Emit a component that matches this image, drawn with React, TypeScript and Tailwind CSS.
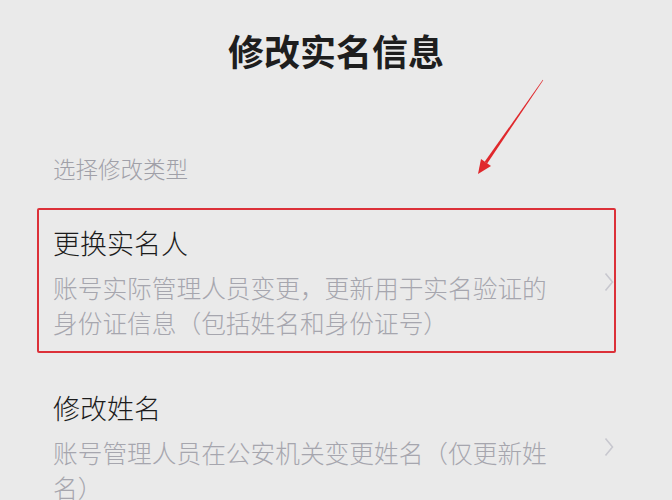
import React from "react";

const Chevron = () => (
  <svg width="10" height="20" viewBox="0 0 10 20" className="shrink-0">
    <polyline points="1.5,1.5 8.5,10 1.5,18.5" fill="none" stroke="#c8c8cf" strokeWidth="1.6" />
  </svg>
);

const Item = ({ title, desc }: { title: string; desc: string }) => (
  <div className="flex items-center pl-[53px] pr-[58px]">
    <div className="w-[505px]">
      <div className="text-[27px] leading-[36px] font-light text-[#1c1c1c]">{title}</div>
      <div className="mt-[8.5px] text-[24.7px] leading-[35px] font-light text-[#a6a6ae]">{desc}</div>
    </div>
    <div className="flex-1" />
    <Chevron />
  </div>
);

export default function App() {
  return (
    <div className="relative w-[672px] h-[500px] overflow-hidden bg-[#eaeaea] font-['Noto_Sans_CJK_SC','Noto_Sans',sans-serif]">
      <div className="pt-[25px] text-center text-[36px] leading-[50px] font-bold text-[#1e1e1e]">修改实名信息</div>
      <div className="mt-[78px] pl-[53px] text-[22.5px] leading-[30px] font-light text-[#a0a0a8]">选择修改类型</div>
      <div className="mt-[42px]">
        <Item title="更换实名人" desc="账号实际管理人员变更，更新用于实名验证的身份证信息（包括姓名和身份证号）" />
      </div>
      <div className="mt-[50.5px]">
        <Item title="修改姓名" desc="账号管理人员在公安机关变更姓名（仅更新姓名）" />
      </div>

      <div className="absolute left-[37px] top-[208px] w-[579px] h-[145px] border-2 border-[#dc3139] rounded-[2px]" />

      <svg className="absolute left-0 top-0" width="672" height="500" viewBox="0 0 672 500">
        <polygon
          points="543.2,80.2 542.8,79.8 484.8,161.6 487.2,163.4"
          fill="#e0282c"
        />
        <polygon points="478,174 491,166 481,159" fill="#e0282c" />
      </svg>
    </div>
  );
}
